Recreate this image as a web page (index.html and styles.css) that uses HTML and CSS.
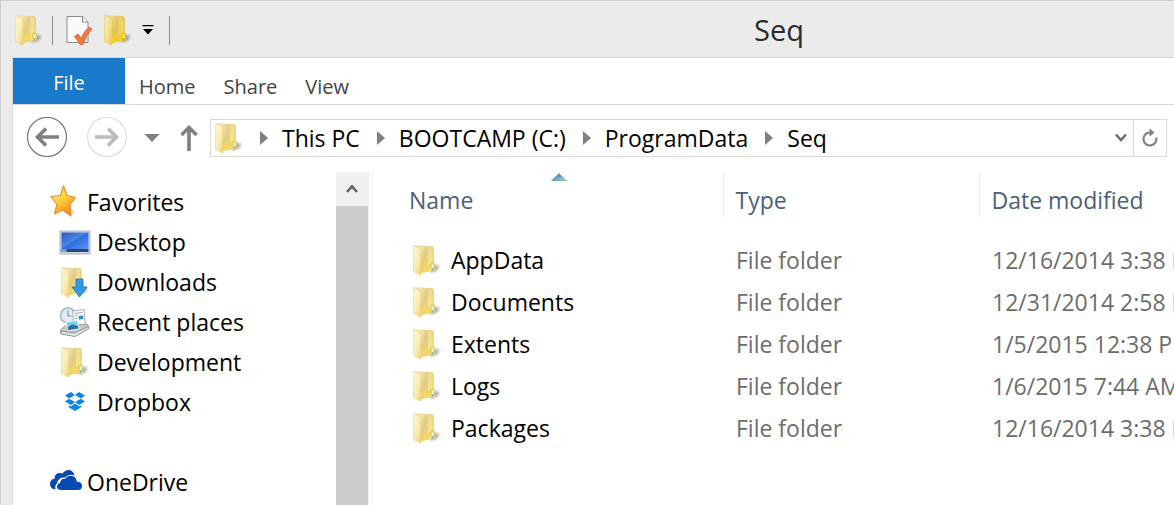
FILE: index.html
```
<!DOCTYPE html>
<html lang="en">
<head>
    <meta charset="UTF-8">
    <meta name="viewport" content="width=device-width, initial-scale=1.0">
    <title>Seq</title>
    <link rel="stylesheet" href="styles.css">
</head>
<body>
    <!-- Shared icons -->
    <svg class="sprites" width="0" height="0" aria-hidden="true">
        <defs>
            <linearGradient id="folder-front" x1="0" y1="0" x2="1" y2="1">
                <stop offset="0" stop-color="#fffbe0"/>
                <stop offset="0.6" stop-color="#f9eaac"/>
                <stop offset="1" stop-color="#edce74"/>
            </linearGradient>
            <linearGradient id="folder-back" x1="0" y1="0" x2="1" y2="0.5">
                <stop offset="0.2" stop-color="#f6edc4"/>
                <stop offset="0.6" stop-color="#e3cb82"/>
                <stop offset="1" stop-color="#f5dc74"/>
            </linearGradient>
            <radialGradient id="folder-shadow">
                <stop offset="0" stop-color="#666" stop-opacity="0.8"/>
                <stop offset="1" stop-color="#999" stop-opacity="0"/>
            </radialGradient>
            <linearGradient id="star-fill" x1="0" y1="0" x2="0.6" y2="1">
                <stop offset="0" stop-color="#fff6b0"/>
                <stop offset="0.5" stop-color="#ffd23e"/>
                <stop offset="1" stop-color="#f58a1f"/>
            </linearGradient>
            <linearGradient id="screen-fill" x1="0" y1="0" x2="1" y2="1">
                <stop offset="0" stop-color="#2a55b8"/>
                <stop offset="0.45" stop-color="#4a86ea"/>
                <stop offset="0.5" stop-color="#2f6bdc"/>
                <stop offset="1" stop-color="#5b9af5"/>
            </linearGradient>
            <linearGradient id="sort-fill" x1="0" y1="0" x2="1" y2="1">
                <stop offset="0" stop-color="#2d627f"/>
                <stop offset="1" stop-color="#b5e6fa"/>
            </linearGradient>
        </defs>
        <symbol id="folder" viewBox="0 0 30 32">
            <ellipse cx="22" cy="24.500" rx="8" ry="5" transform="rotate(-25 22 24.500)" fill="url(#folder-shadow)"/>
            <path d="M2 1.800 L20.500 2.500 L21.500 4 L21.500 26 L8 29 Z" fill="url(#folder-back)" stroke="#e3ca7c" stroke-width="0.6"/>
            <path d="M15.500 3 L20 3.500 V19 L16 21 Z" fill="#fff4c0" opacity="0.35"/>
            <path d="M9 22 L19 20 L20 26.500 L9 29 Z" fill="#f4d862" opacity="0.7"/>
            <path d="M18.500 20 Q18.500 18.500 21 18.500 Q22.800 18.500 22.800 21 L23 26 L19.500 27.500 Z" fill="#f4d65a" stroke="#e0bd4a" stroke-width="0.5"/>
            <path d="M20.500 20.500 V24" stroke="#fff" stroke-width="1.300"/>
            <path d="M20.600 24 V26.500" stroke="#6fb4e6" stroke-width="1.200"/>
            <path d="M1.800 1.500 L9 5 L9 31 L8 31 L1.500 27.500 Z" fill="url(#folder-front)" stroke="#e9d080" stroke-width="0.6"/>
        </symbol>
        <symbol id="crumb" viewBox="0 0 8 14">
            <path d="M0 0 L8 7 L0 14 Z" fill="#808080"/>
        </symbol>
    </svg>

    <div class="window">
        <header class="titlebar">
            <div class="quick-access">
                <svg class="icon-folder" aria-hidden="true"><use href="#folder"/></svg>
                <span class="divider"></span>
                <button class="tool" aria-label="Properties">
                    <svg width="28" height="30" viewBox="0 0 28 30">
                        <path d="M2 1.500 H18 L23 7 V27.500 H2 Z" fill="#fafafa" stroke="#8b8b8b"/>
                        <path d="M17.500 1.500 V7 H23" fill="#fff" stroke="#8b8b8b"/>
                        <path d="M9.500 21.500 L13 19 L16 23 Q19 16.500 24 12 L27 14 Q21 20 18.500 29 L15.500 30 Z" fill="#f07a43" stroke="#d9602c" stroke-width="0.8"/>
                    </svg>
                </button>
                <button class="tool" aria-label="New folder">
                    <svg class="icon-folder icon-strong"><use href="#folder"/></svg>
                </button>
                <button class="tool tool-menu" aria-label="Customize Quick Access Toolbar">
                    <svg width="12" height="10" viewBox="0 0 12 10">
                        <path d="M0.500 0 H11.500 V1.200 H0.500 Z M1 4 H11 L6 9.500 Z" fill="#000"/>
                    </svg>
                </button>
                <span class="divider"></span>
            </div>
            <h1 class="title">Seq</h1>
        </header>

        <main class="content">
            <nav class="ribbon" aria-label="Ribbon">
                <button class="tab tab-file">File</button>
                <button class="tab">Home</button>
                <button class="tab">Share</button>
                <button class="tab">View</button>
            </nav>

            <div class="navbar">
                <button class="nav-button" aria-label="Back">
                    <svg width="42" height="42" viewBox="0 0 42 42">
                        <circle cx="21" cy="20" r="19.500" fill="none" stroke="#767676" stroke-width="1.200"/>
                        <path d="M33 20 H11.500 M20 11.500 L11.500 20 L20 28.500" fill="none" stroke="#808080" stroke-width="3.600"/>
                    </svg>
                </button>
                <button class="nav-button nav-forward" aria-label="Forward">
                    <svg width="42" height="42" viewBox="0 0 42 42">
                        <circle cx="21" cy="20" r="19.500" fill="none" stroke="#dedede" stroke-width="1.200"/>
                        <path d="M9 20 H30.500 M22 11.500 L30.500 20 L22 28.500" fill="none" stroke="#bcbcbc" stroke-width="3.600"/>
                    </svg>
                </button>
                <button class="nav-button nav-recent" aria-label="Recent locations">
                    <svg width="16" height="8" viewBox="0 0 16 8"><path d="M0.500 0 H15.500 L8 8 Z" fill="#808080"/></svg>
                </button>
                <button class="nav-button nav-up" aria-label="Up">
                    <svg width="18" height="28" viewBox="0 0 18 28">
                        <path d="M9 27 V3 M1.500 11 L9 3.500 L16.500 11" fill="none" stroke="#808080" stroke-width="3.600"/>
                    </svg>
                </button>

                <div class="address">
                    <svg class="icon-folder" aria-hidden="true"><use href="#folder"/></svg>
                    <svg class="crumb-arrow" aria-hidden="true"><use href="#crumb"/></svg>
                    <a class="crumb" href="#">This PC</a>
                    <svg class="crumb-arrow" aria-hidden="true"><use href="#crumb"/></svg>
                    <a class="crumb" href="#">BOOTCAMP (C:)</a>
                    <svg class="crumb-arrow" aria-hidden="true"><use href="#crumb"/></svg>
                    <a class="crumb" href="#">ProgramData</a>
                    <svg class="crumb-arrow" aria-hidden="true"><use href="#crumb"/></svg>
                    <a class="crumb" href="#">Seq</a>
                    <button class="address-drop" aria-label="Previous locations">
                        <svg width="12" height="10" viewBox="0 0 12 10"><path d="M1 1.500 L6 7 L11 1.500" fill="none" stroke="#707070" stroke-width="2.600"/></svg>
                    </button>
                    <button class="refresh" aria-label="Refresh">
                        <svg width="18" height="20" viewBox="0 0 18 20">
                            <path d="M9 4.500 A6.500 6.500 0 1 0 15.300 9.500" fill="none" stroke="#808080" stroke-width="2.200"/>
                            <path d="M8.500 0.500 V8 H9.500 L13.500 4.500 Z" fill="#808080"/>
                        </svg>
                    </button>
                </div>
            </div>

            <div class="panes">
                <nav class="sidebar" aria-label="Navigation pane">
                    <ul class="tree">
                        <li><a class="node" href="#">
                            <svg width="28" height="34" viewBox="0 0 28 34">
                                <ellipse cx="20" cy="27" rx="8" ry="3" fill="url(#folder-shadow)" opacity="0.6"/>
                                <path d="M14.500 1 L18 10.500 L26.500 12.500 L21 19.500 L22 31 L14 25 L5.500 29 L8 19.500 L2 11.500 L11.500 10.500 Z" fill="url(#star-fill)" stroke="#ee8f24" stroke-width="1.200" stroke-linejoin="round"/>
                            </svg>
                            Favorites</a></li>
                        <li><a class="node node-child" href="#">
                            <svg width="32" height="32" viewBox="0 0 32 32">
                                <rect x="1" y="5" width="30" height="23" fill="#cfd6e0" stroke="#a9b5c4"/>
                                <rect x="2.500" y="6.500" width="27" height="17" fill="url(#screen-fill)"/>
                                <rect x="2.500" y="23" width="27" height="3" fill="#33476c"/>
                                <rect x="2.500" y="23" width="5" height="3" fill="#6aa8dc"/>
                            </svg>
                            Desktop</a></li>
                        <li><a class="node node-child" href="#">
                            <svg width="32" height="32" viewBox="0 0 32 32">
                                <use href="#folder" x="1" width="30" height="32"/>
                                <path d="M17 13 H24 V21 H28 L20.500 31 L13 21 H17 Z" fill="#2f9be8" stroke="#1c76bd" stroke-width="0.8"/>
                            </svg>
                            Downloads</a></li>
                        <li><a class="node node-child" href="#">
                            <svg width="32" height="32" viewBox="0 0 32 32">
                                <circle cx="9" cy="9.500" r="7.500" fill="#e2ebf2" stroke="#b4c2cd" stroke-width="2"/>
                                <path d="M9 4.500 V10 H12.500" fill="none" stroke="#8296a6" stroke-width="1.200"/>
                                <path d="M13.500 5 L25 3.500 L26.500 20 L15 22 Z" fill="#fafafa" stroke="#9aa2a9" stroke-width="0.8"/>
                                <path d="M15.500 7.500 L23.500 6.500 M15.500 10 L18.500 9.600 M16 12.500 L18.500 12.200" stroke="#a6abb1"/>
                                <path d="M19.500 10 L24 9.500 L24.500 13 L20 13.500 Z" fill="#2b93c4"/>
                                <path d="M1.500 24 L6 20 L28 18 L30 21 L16 30 L2 27.500 Z" fill="#c5c7c9" stroke="#8a8c8f" stroke-width="0.8"/>
                                <path d="M7 16 L18.500 14.500 L20 23 L9 24.500 Z" fill="#7cc8ee" stroke="#f5f5f5"/>
                                <path d="M8.500 21.500 L13 18.500 L19 20 L19.500 22.500 L9.200 24 Z" fill="#256fa0"/>
                                <path d="M2 25 L15.500 27 L29.500 20.500 L30 22.500 L16 30.500 L2 28 Z" fill="#e4e5e6" stroke="#808285" stroke-width="0.8"/>
                            </svg>
                            Recent places</a></li>
                        <li><a class="node node-child" href="#">
                            <svg width="32" height="32" viewBox="0 0 32 32"><use href="#folder" x="1" width="30" height="32"/></svg>
                            Development</a></li>
                        <li><a class="node node-child" href="#">
                            <svg width="32" height="32" viewBox="0 0 32 32">
                                <path d="M12 6 L16 9 L10 12.500 L6 9.500 Z M20 6 L16 9 L22 12.500 L26 9.500 Z M6 15.500 L10 12.700 L16 16 L12 19 Z M26 15.500 L22 12.700 L16 16 L20 19 Z M16 17.500 L20.500 20.500 L22.500 19.500 V21 L16 25 L9.500 21 V19.500 L11.500 20.500 Z" fill="#0a84e8"/>
                            </svg>
                            Dropbox</a></li>
                    </ul>
                    <ul class="tree">
                        <li><a class="node node-cloud" href="#">
                            <svg width="32" height="24" viewBox="0 0 32 24">
                                <path d="M5.500 19.500 Q0 19 0 14 Q0 9.500 4.500 8.800 Q4.500 3 10 3 Q11.500 3 12.500 3.600 Q15 0 18.500 0 Q23 0 24.600 5.500 Q19 3.500 15 7.500 Q8.500 7 7 13.300 Q4.500 15.500 5.500 19.500 Z" fill="#094ab2"/>
                                <path d="M11 20 Q7 20 7 16.500 Q7 13.500 10 13 Q10.500 8.500 15 8.700 Q17 5.800 20.500 5.800 Q26 6 26.800 11.500 Q32 11.800 32 16 Q32 20 28 20 Z" fill="#094ab2"/>
                            </svg>
                            OneDrive</a></li>
                    </ul>
                </nav>

                <div class="scrollbar">
                    <button class="scroll-up" aria-label="Scroll up">
                        <svg width="12" height="10" viewBox="0 0 12 10"><path d="M1 8 L6 2.500 L11 8" fill="none" stroke="#606060" stroke-width="2.600"/></svg>
                    </button>
                    <div class="scroll-thumb"></div>
                </div>

                <div class="files">
                    <table class="file-table">
                        <thead>
                            <tr>
                                <th class="col-name" aria-sort="ascending">
                                    <svg class="sort-arrow" width="16" height="8" viewBox="0 0 16 8"><path d="M0.500 8 L8 0.500 L15.500 8 Z" fill="url(#sort-fill)" stroke="#3f7fa3" stroke-width="0.6"/></svg>
                                    Name
                                </th>
                                <th class="col-type">Type</th>
                                <th class="col-date">Date modified</th>
                            </tr>
                        </thead>
                        <tbody>
                            <tr>
                                <td><a class="file" href="#"><svg class="icon-folder" aria-hidden="true"><use href="#folder"/></svg>AppData</a></td>
                                <td>File folder</td>
                                <td>12/16/2014 3:38 PM</td>
                            </tr>
                            <tr>
                                <td><a class="file" href="#"><svg class="icon-folder" aria-hidden="true"><use href="#folder"/></svg>Documents</a></td>
                                <td>File folder</td>
                                <td>12/31/2014 2:58 PM</td>
                            </tr>
                            <tr>
                                <td><a class="file" href="#"><svg class="icon-folder" aria-hidden="true"><use href="#folder"/></svg>Extents</a></td>
                                <td>File folder</td>
                                <td>1/5/2015 12:38 PM</td>
                            </tr>
                            <tr>
                                <td><a class="file" href="#"><svg class="icon-folder" aria-hidden="true"><use href="#folder"/></svg>Logs</a></td>
                                <td>File folder</td>
                                <td>1/6/2015 7:44 AM</td>
                            </tr>
                            <tr>
                                <td><a class="file" href="#"><svg class="icon-folder" aria-hidden="true"><use href="#folder"/></svg>Packages</a></td>
                                <td>File folder</td>
                                <td>12/16/2014 3:38 PM</td>
                            </tr>
                        </tbody>
                    </table>
                </div>
            </div>
        </main>
    </div>
</body>
</html>
```
FILE: styles.css
```
* {
    box-sizing: border-box;
}

body {
    margin: 0;
    font-family: "Open Sans", "Noto Sans", sans-serif;
    font-size: 23px;
    line-height: 32px;
    color: #000;
    background: #ebebeb;
    overflow: hidden;
}

button {
    margin: 0;
    padding: 0;
    border: none;
    background: none;
    font: inherit;
    color: inherit;
    cursor: pointer;
}

a {
    color: inherit;
    text-decoration: none;
}

svg {
    display: block;
    flex: none;
}

.sprites {
    position: absolute;
}

.icon-folder {
    width: 30px;
    height: 32px;
}

.icon-strong {
    filter: saturate(1.5) brightness(0.95);
}

.window {
    display: flex;
    flex-direction: column;
    min-height: 100vh;
    padding-left: 11px;
    border-top: 1px solid #cfcfcf;
    border-left: 1px solid #cfcfcf;
}

/* Title bar */
.titlebar {
    display: flex;
    align-items: center;
    height: 56px;
    padding-top: 2px;
}

.quick-access {
    display: flex;
    align-items: center;
    padding-left: 2px;
}

.divider {
    width: 1px;
    height: 29px;
    background: #8c8c8c;
}

.quick-access .divider:nth-child(2) {
    margin: 0 12px 0 8px;
}

.tool + .tool {
    margin-left: 10px;
}

.tool + .tool-menu {
    margin-left: 9px;
}

.tool-menu + .divider {
    margin-left: 15px;
}

.title {
    flex: 1;
    margin: 0;
    padding-left: 214px;
    font-size: 29px;
    font-weight: normal;
    line-height: 40px;
    text-align: center;
    color: #2b2b2b;
}

/* Ribbon */
.content {
    display: flex;
    flex: 1;
    flex-direction: column;
    border-top: 1px solid #d9d9d9;
    border-left: 1px solid #d9d9d9;
    background: #fff;
}

.ribbon {
    display: flex;
    height: 47px;
    border-bottom: 1px solid #d9d9d9;
    font-size: 20px;
    color: #444;
}

.tab {
    padding: 12px 14px 0;
}

.tab-file {
    width: 112px;
    padding-top: 4px;
    background: #1979ca;
    color: #fff;
}

/* Navigation bar */
.navbar {
    display: flex;
    align-items: center;
    padding: 12px 7px 13px 13px;
}

.nav-forward {
    margin-left: 18px;
}

.nav-recent {
    margin-left: 16px;
}

.nav-up {
    margin: 0 12px 0 20px;
}

.address {
    display: flex;
    flex: 1;
    align-items: center;
    height: 38px;
    padding-left: 3px;
    border: 1px solid #d9d9d9;
}

.crumb-arrow {
    width: 8px;
    height: 14px;
    margin: 0 14px 0 17px;
}

.icon-folder + .crumb-arrow {
    margin-left: 16px;
}

.address-drop {
    margin-left: auto;
    padding: 0 6px 0 8px;
}

.refresh {
    display: flex;
    align-items: center;
    justify-content: center;
    align-self: stretch;
    width: 33px;
    border-left: 1px solid #d9d9d9;
}

/* Panes */
.panes {
    display: flex;
    flex: 1;
}

.sidebar {
    width: 323px;
    padding: 10px 0 0 36px;
}

.tree {
    margin: 0 0 40px;
    padding: 0;
    list-style: none;
}

.tree:last-child {
    margin-bottom: 0;
}

.node {
    display: flex;
    align-items: center;
    gap: 10px;
    height: 40px;
}

.node-child {
    gap: 6px;
    padding-left: 10px;
}

.node-cloud {
    gap: 5px;
    padding-left: 1px;
}

.scrollbar {
    display: flex;
    flex-direction: column;
    width: 33px;
    border-right: 1px solid #f0f0f0;
    background: #f0f0f0;
}

.scroll-up {
    display: flex;
    align-items: center;
    justify-content: center;
    height: 34px;
}

.scroll-thumb {
    flex: 1;
    background: #cdcdcd;
}

/* File list */
.files {
    flex: 1;
    min-width: 0;
    margin-left: 2px;
    border-left: 1px solid #f5f5f5;
    overflow: hidden;
}

.file-table {
    width: 864px;
    border-collapse: collapse;
    table-layout: fixed;
}

.file-table th {
    position: relative;
    height: 45px;
    padding: 10px 12px 0;
    border-left: 1px solid #ececec;
    font-weight: normal;
    text-align: left;
    color: #4c607a;
}

.file-table .col-name {
    width: 351px;
    padding-left: 37px;
    border-left: none;
}

.file-table .col-type {
    width: 256px;
}

.sort-arrow {
    position: absolute;
    top: 1px;
    left: 179px;
}

.file-table tbody::before {
    content: "";
    display: block;
    height: 22px;
}

.file-table td {
    height: 42px;
    padding: 0 13px;
    color: #6d6d6d;
    white-space: nowrap;
}

.file-table td:first-child {
    padding-left: 40px;
}

.file {
    display: flex;
    align-items: center;
    gap: 9px;
    color: #000;
}
```
